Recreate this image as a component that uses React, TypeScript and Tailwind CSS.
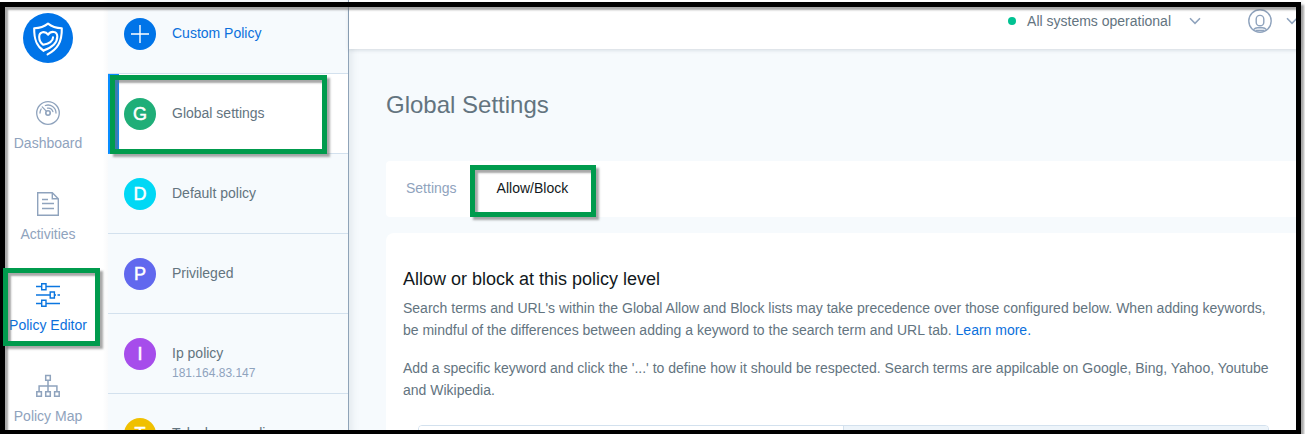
import React from "react";

type Policy = { letter: string; color: string; name: string; note?: string; active?: boolean };

const policies: Policy[] = [
  { letter: "G", color: "bg-[#1fae78]", name: "Global settings", active: true },
  { letter: "D", color: "bg-[#00d8f5]", name: "Default policy" },
  { letter: "P", color: "bg-[#6168ee]", name: "Privileged" },
  { letter: "I", color: "bg-[#a64deb]", name: "Ip policy", note: "181.164.83.147" },
  { letter: "T", color: "bg-[#f0c000]", name: "Telashome policy" },
];

function Logo() {
  return (
    <svg width="50" height="50" viewBox="0 0 50 50" fill="none" className="shrink-0">
      <circle cx="25" cy="25" r="25" fill="#0074e8" />
      <g stroke="#fff" strokeWidth="2.1" strokeLinecap="round" strokeLinejoin="round">
        <path d="M20.5 37.6C14 33.5 11 27.5 11.2 15.2 17 15 21.5 13.4 25 10.6 28.5 13.4 33 15 38.8 15.2 39.1 29.5 34 36.5 24.6 41.4" />
        <path d="M20.5 37.6C29.5 34.5 34.3 29.5 34.3 23.6 34.3 17.7 27.8 17.7 25.1 21.7 22.2 17.7 16.2 18.5 16.2 24 16.2 28.5 18.3 30.4 20.3 31.8 26 30.4 30 27.8 30 24.4" />
      </g>
    </svg>
  );
}

function GaugeIcon() {
  return (
    <svg width="24" height="24" viewBox="0 0 24 24" fill="none" stroke="#8fa3bd" strokeWidth="1.3" strokeLinecap="round">
      <circle cx="12" cy="12" r="11.3" />
      <circle cx="12" cy="12" r="2.2" strokeWidth="1.6" />
      <path d="M10.5 10.4 6.2 5.9M4 12a8 8 0 0 1 1.2-4M9.4 4.5A8 8 0 0 1 20 12M11.5 7.2A5 5 0 0 1 16.9 10.6" />
    </svg>
  );
}

function DocIcon() {
  return (
    <svg width="24" height="24" viewBox="0 0 24 24" fill="none" stroke="#8fa3bd" strokeWidth="1.4">
      <path d="M1.7.7H16.3L22.3 6.7V23.3H1.7ZM16.3.7V6.7H22.3M6 7.5H12M6 11.5H18M6 16.5H18" />
    </svg>
  );
}

function SlidersIcon() {
  return (
    <svg width="24" height="24" viewBox="0 0 24 24" fill="none" stroke="#0b76e0" strokeWidth="1.4">
      <path d="M0 3.5H5.7M10 3.5H24M0 12H14M18.5 12H20M21.5 12H24M0 20.5H5.7M10 20.5H24" />
      <path d="M5.7.7H10V6.7H5.7ZM14.2 9H18.4V15H14.2ZM5.7 17.3H10V23.3H5.7Z" />
    </svg>
  );
}

function TreeIcon() {
  return (
    <svg width="24" height="24" viewBox="0 0 24 24" fill="none" stroke="#8fa3bd" strokeWidth="1.5">
      <path d="M9.7 1.5H14.3V6.3H9.7ZM.8 17.7H5.4V22.3H.8ZM9.7 17.7H14.3V22.3H9.7ZM18.6 17.7H23.2V22.3H18.6ZM12 6.3V17.7M3.1 17.7V12H20.9V17.7" />
    </svg>
  );
}

function UserIcon() {
  return (
    <svg width="24" height="24" viewBox="0 0 24 24" fill="none" stroke="#8fa3bd" strokeWidth="1.4">
      <circle cx="12" cy="12" r="11.2" />
      <rect x="8.2" y="6.4" width="7.6" height="10.4" rx="3.6" />
      <path d="M5.5 20.6C7 18.9 8.2 18.7 9.5 18.7H14.5C15.8 18.7 17 18.9 18.5 20.6" />
      <path d="M7.5 21.4H16.5" />
    </svg>
  );
}

function Chevron() {
  return (
    <svg width="12" height="8" viewBox="0 0 12 8" fill="none" stroke="#8fa3bd" strokeWidth="1.6" className="shrink-0">
      <path d="M1 1.3 6 6.3 11 1.3" />
    </svg>
  );
}

function NavItem({ label, active, children }: { label: string; active?: boolean; children: React.ReactNode }) {
  return (
    <div className={`flex h-[91px] shrink-0 flex-col items-center ${active ? "text-[#0b70dc]" : "text-[#8fa3bd]"}`}>
      {children}
      <span className="mt-2 text-sm leading-5 whitespace-nowrap">{label}</span>
    </div>
  );
}

function Highlight({ className }: { className: string }) {
  return (
    <div
      className={`pointer-events-none absolute border-5 border-[#009b4d] shadow-[3px_3px_2px_rgba(110,110,110,0.6),inset_3px_3px_2px_rgba(110,110,110,0.6)] ${className}`}
    />
  );
}

export default function App() {
  return (
    <div className="relative flex h-[434px] w-[1305px] overflow-hidden bg-white font-['Liberation_Sans',Arial,sans-serif] text-sm text-[#63747f]">
      <nav className="flex w-[108px] shrink-0 flex-col items-center bg-gradient-to-r from-white from-95% to-[#f9fafb] pt-[13px] pr-3">
        <Logo />
        <div className="mt-[38px] flex flex-col">
          <NavItem label="Dashboard"><GaugeIcon /></NavItem>
          <NavItem label="Activities"><DocIcon /></NavItem>
          <NavItem label="Policy Editor" active><SlidersIcon /></NavItem>
          <NavItem label="Policy Map"><TreeIcon /></NavItem>
        </div>
      </nav>

      <aside className="w-[241px] shrink-0 border-r border-[#8fa3b8] bg-[#f6fafd]">
        <div className="flex h-[74px] items-center gap-4 border-b border-[#d3e1ee] pb-[6px] pl-4 text-[#0b70dc]">
          <svg width="32" height="32" viewBox="0 0 32 32">
            <circle cx="16" cy="16" r="16" fill="#0074e8" />
            <path d="M16 7V25M7 16H25" stroke="#fff" strokeWidth="1.4" />
          </svg>
          <span className="pb-[2px]">Custom Policy</span>
        </div>
        {policies.map((p) => (
          <div
            key={p.name}
            className={`flex h-20 items-center gap-4 border-b border-[#d3e1ee] ${
              p.active ? "border-l-[11px] border-l-[#078cff] bg-white pl-[5px]" : "pl-4"
            }`}
          >
            <div className={`flex size-8 shrink-0 items-center justify-center rounded-full pt-px text-lg leading-none text-white [-webkit-text-stroke:0.5px_white] ${p.color}`}>
              {p.letter}
            </div>
            <div className={p.note ? "pt-[18px]" : "pb-[2px]"}>
              <div className="leading-5">{p.name}</div>
              {p.note && <div className="mt-px text-xs leading-[19px] text-[#8fa3bd]">{p.note}</div>}
            </div>
          </div>
        ))}
      </aside>

      <main className="mr-1 flex min-w-0 grow flex-col bg-[#f6fafd] shadow-[inset_8px_0_8px_-6px_rgba(60,80,100,0.12)]">
        <header className="flex h-[49px] shrink-0 items-center justify-end bg-white pr-[3px] pb-[7px] shadow-[0_1px_4px_rgba(60,80,100,0.2)]">
          <span className="mr-[11px] size-2 rounded-full bg-[#00c292]" />
          <span className="mr-[18px]">All systems operational</span>
          <Chevron />
          <span className="ml-[47px] mr-[14px]"><UserIcon /></span>
          <Chevron />
        </header>
        <div className="flex grow flex-col pl-[37px]">
          <h1 className="mt-[40px] text-2xl leading-8">Global Settings</h1>
          <div className="mt-[40px] flex h-14 shrink-0 gap-10 rounded-l-[4px] bg-white pt-[17px] pl-5 leading-5">
            <span className="text-[#8fa3bd]">Settings</span>
            <span className="text-[#111820]">Allow/Block</span>
          </div>
          <section className="mt-4 flex h-[201px] shrink-0 flex-col rounded-tl-lg bg-white pt-[34px] pl-[17px]">
            <h2 className="text-lg leading-6 text-[#111820]">Allow or block at this policy level</h2>
            <p className="mt-[6px] leading-[22px] whitespace-nowrap">
              Search terms and URL's within the Global Allow and Block lists may take precedence over those configured below. When adding keywords,<br />
              be mindful of the differences between adding a keyword to the search term and URL tab. <a className="text-[#0b70dc]">Learn more.</a>
            </p>
            <p className="mt-4 leading-[22px] whitespace-nowrap">
              Add a specific keyword and click the '...' to define how it should be respected. Search terms are appilcable on Google, Bing, Yahoo, Youtube<br />
              and Wikipedia.
            </p>
            <div className="mt-6 ml-[15px] flex h-10 w-[851px] shrink-0 overflow-hidden rounded-t-[4px] border border-[#d3e1ee]">
              <div className="w-[425px] border-r border-[#d3e1ee] bg-white" />
              <div className="grow bg-[#edf4fa]" />
            </div>
          </section>
        </div>
      </main>

      <Highlight className="top-[75px] left-[110px] h-[79px] w-[217px]" />
      <Highlight className="top-[165px] left-[470px] h-[52px] w-[126px]" />
      <div className="pointer-events-none absolute top-[2px] left-0 h-[433px] w-[1301px] border-5 border-black shadow-[3px_3px_2px_rgba(110,110,110,0.6),inset_3px_3px_2px_rgba(110,110,110,0.6)]" />
      <Highlight className="top-[268px] left-[3px] h-[78px] w-[97px]" />
    </div>
  );
}
